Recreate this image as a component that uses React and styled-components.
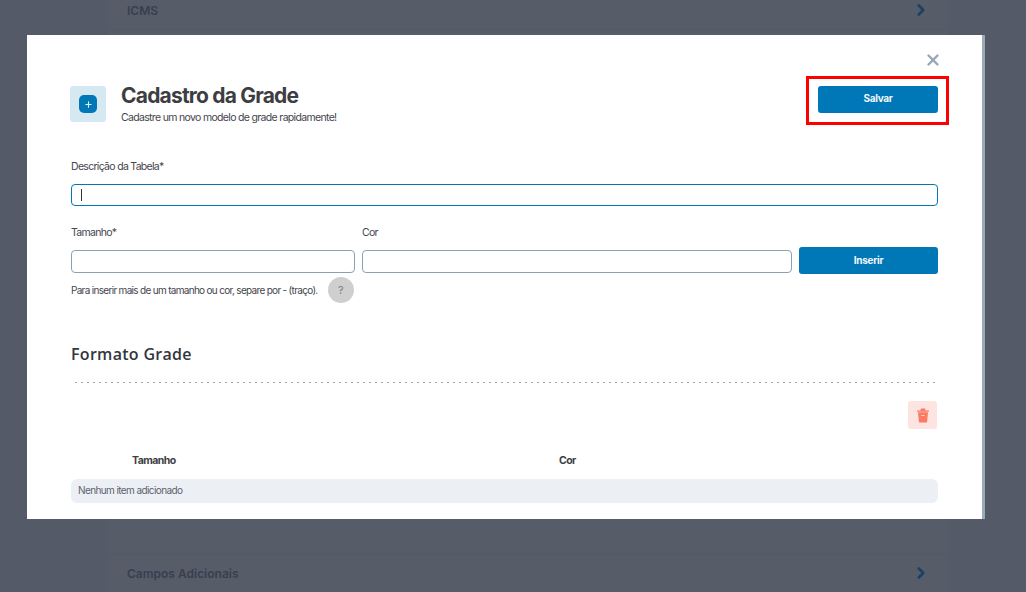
import styled, { createGlobalStyle } from "styled-components";
import { ChevronRight, Plus, X } from "lucide-react";

const GlobalStyle = createGlobalStyle`
  html, body {
    margin: 0;
    height: 100%;
    overflow: hidden;
    background: #f6f7f9;
    font-family: "Inter", "Liberation Sans", sans-serif;
  }
  * {
    box-sizing: border-box;
  }
`;

const Page = styled.div`
  height: 592px;
  padding: 0 78px 0 108px;
  display: flex;
  flex-direction: column;
  gap: 3px;
`;
const Section = styled.div`
  height: ${(p) => p.$height}px;
  flex: ${(p) => (p.$grow ? 1 : "none")};
  background: #fff;
  padding: ${(p) => p.$padding};
  display: flex;
  justify-content: space-between;
  align-items: flex-start;
  font-size: 12px;
  font-weight: 600;
  color: #8d8b9e;
`;
const Chevron = styled(ChevronRight)`
  margin-top: -2px;
  color: #1a8ef0;
`;

const Overlay = styled.div`
  position: fixed;
  inset: 0;
  background: rgba(30, 37, 54, 0.75);
`;
const Modal = styled.div`
  position: absolute;
  left: 27px;
  top: 35px;
  width: 958px;
  height: 484px;
  background: #fff;
  border-right: 3px solid #9aabb8;
  padding: 16px 44px 0 44px;
  overflow: hidden;
`;
const CloseRow = styled.div`
  height: 20px;
  margin-right: -4px;
  display: flex;
  justify-content: flex-end;
  color: #96a7b7;
`;
const Header = styled.div`
  margin-top: 15px;
  display: flex;
  align-items: flex-start;
  justify-content: space-between;
`;
const TitleGroup = styled.div`
  margin-left: -1px;
  display: flex;
  gap: 15px;
`;
const IconBox = styled.div`
  width: 36px;
  height: 36px;
  border-radius: 3px;
  background: #d6e9f3;
  display: flex;
  align-items: center;
  justify-content: center;
`;
const IconInner = styled.div`
  width: 18px;
  height: 18px;
  border-radius: 5px;
  background: #0077b6;
  color: #e6f2f8;
  display: flex;
  align-items: center;
  justify-content: center;
`;
const Title = styled.h1`
  margin: -3px 0 0;
  font-size: 21px;
  line-height: 25px;
  font-weight: 700;
  letter-spacing: -0.8px;
  color: #3e3e42;
`;
const Subtitle = styled.p`
  margin: 3px 0 0;
  font-size: 10.5px;
  line-height: 14px;
  letter-spacing: -0.67px;
  color: #45454d;
`;
const Highlight = styled.div`
  position: relative;
`;
const HighlightFrame = styled.div`
  position: absolute;
  left: -12px;
  top: -10px;
  right: -11px;
  bottom: -12px;
  border: 3px solid #ff0000;
  pointer-events: none;
`;
const Button = styled.button`
  display: block;
  width: ${(p) => p.$width}px;
  height: ${(p) => p.$height}px;
  padding: 0 0 ${(p) => p.$lift}px;
  border: 0;
  border-radius: 3px;
  background: #0077b6;
  color: #f2f8fb;
  font-family: inherit;
  font-size: 10px;
  font-weight: 700;
  letter-spacing: -0.3px;
`;
const Label = styled.label`
  display: block;
  font-size: 10.5px;
  line-height: 14px;
  letter-spacing: -0.7px;
  color: #45454d;
`;
const Field = styled.div`
  margin-top: ${(p) => p.$top || 0}px;
`;
const TextInput = styled.div`
  height: ${(p) => p.$height}px;
  margin-top: ${(p) => p.$top}px;
  margin-bottom: ${(p) => p.$bottom || 0}px;
  border: 1px solid ${(p) => (p.$focused ? "#0077b6" : "#8ca0b1")};
  border-radius: 4px;
  background: #fff;
  padding-left: 9px;
  display: flex;
  align-items: center;
`;
const Caret = styled.span`
  width: 1px;
  height: 12px;
  background: #333;
`;
const InputRow = styled.div`
  margin-top: 20px;
  display: grid;
  grid-template-columns: 284px 430px 139px;
  gap: 7px;
  align-items: end;
`;
const Hint = styled.div`
  margin-top: 3px;
  display: flex;
  align-items: center;
  gap: 10px;
  font-size: 10px;
  letter-spacing: -0.69px;
  color: #45454d;
`;
const HelpBadge = styled.div`
  width: 26px;
  height: 26px;
  border-radius: 50%;
  background: #cfcfcf;
  color: #7a7a7a;
  font-size: 11px;
  font-weight: 400;
  display: flex;
  align-items: center;
  justify-content: center;
`;
const SectionTitle = styled.h2`
  margin: 41px 0 0;
  font-family: "Open Sans", sans-serif;
  font-size: 16px;
  line-height: 20px;
  font-weight: 600;
  letter-spacing: 0.3px;
  color: #33363d;
`;
const Dotted = styled.div`
  margin: 18px 3px 0 4px;
  height: 1px;
  background: repeating-linear-gradient(90deg, #96a7b7 0 2px, transparent 2px 6px);
`;
const ActionRow = styled.div`
  margin-top: 18px;
  padding-right: 1px;
  display: flex;
  justify-content: flex-end;
`;
const TrashButton = styled.div`
  width: 29px;
  height: 28px;
  border-radius: 3px;
  background: #fde4e1;
  display: flex;
  align-items: center;
  justify-content: center;
`;
const TableHead = styled.div`
  margin-top: 25px;
  display: grid;
  grid-template-columns: 61px 427px 1fr;
  font-size: 10.5px;
  line-height: 14px;
  font-weight: 700;
  letter-spacing: -0.55px;
  color: #3e3e42;
`;
const EmptyRow = styled.div`
  margin-top: 11px;
  height: 24px;
  border-radius: 6px;
  background: #ecf0f4;
  padding: 0 0 3px 7px;
  display: flex;
  align-items: center;
  font-size: 10px;
  letter-spacing: -0.6px;
  color: #5c6270;
`;

function TrashIcon() {
  return (
    <svg width="14" height="15" viewBox="0 0 14 15" fill="none">
      <path d="M5 0.5h4l0.6 2H13v1.2H1V2.5h3.400z" fill="#fb7a63" />
      <path d="M2 4.300h10l-0.9 9.100a1.400 1.400 0 0 1-1.400 1.200H4.300a1.400 1.400 0 0 1-1.400-1.200z" fill="#fb7a63" />
      <rect x="5.300" y="7" width="3.400" height="1" fill="#fdd2c8" />
    </svg>
  );
}

export default function App() {
  return (
    <>
      <GlobalStyle />
      <Page>
        <Section $height={28} $padding="3px 18px 0 19px">
          ICMS
          <Chevron size={18} strokeWidth={3.5} />
        </Section>
        <Section $grow />
        <Section $height={36} $padding="10px 18px 0 19px">
          Campos Adicionais
          <Chevron size={18} strokeWidth={3.5} />
        </Section>
      </Page>
      <Overlay>
        <Modal>
          <CloseRow>
            <X size={18} strokeWidth={3.2} />
          </CloseRow>
          <Header>
            <TitleGroup>
              <IconBox>
                <IconInner>
                  <Plus size={9} strokeWidth={3} />
                </IconInner>
              </IconBox>
              <div>
                <Title>Cadastro da Grade</Title>
                <Subtitle>Cadastre um novo modelo de grade rapidamente!</Subtitle>
              </div>
            </TitleGroup>
            <Highlight>
              <Button $width={120} $height={27} $lift={3}>Salvar</Button>
              <HighlightFrame />
            </Highlight>
          </Header>
          <Field $top={35}>
            <Label>Descrição da Tabela*</Label>
            <TextInput $focused $height={22} $top={10}>
              <Caret />
            </TextInput>
          </Field>
          <InputRow>
            <div>
              <Label>Tamanho*</Label>
              <TextInput $height={23} $top={10} $bottom={1} />
            </div>
            <div>
              <Label>Cor</Label>
              <TextInput $height={23} $top={10} $bottom={1} />
            </div>
            <Button $width={139} $height={27} $lift={2}>Inserir</Button>
          </InputRow>
          <Hint>
            Para inserir mais de um tamanho ou cor, separe por - (traço).
            <HelpBadge>?</HelpBadge>
          </Hint>
          <SectionTitle>Formato Grade</SectionTitle>
          <Dotted />
          <ActionRow>
            <TrashButton>
              <TrashIcon />
            </TrashButton>
          </ActionRow>
          <TableHead>
            <span />
            <span>Tamanho</span>
            <span>Cor</span>
          </TableHead>
          <EmptyRow>Nenhum item adicionado</EmptyRow>
        </Modal>
      </Overlay>
    </>
  );
}
